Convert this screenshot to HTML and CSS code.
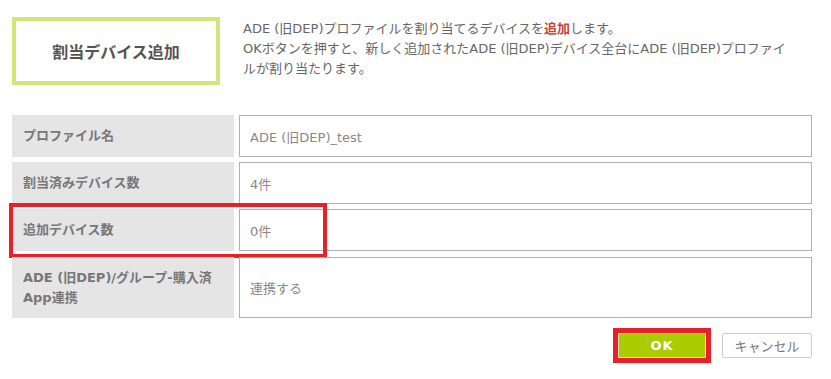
FILE: index.html
```html
<!DOCTYPE html>
<html lang="ja">
<head>
    <meta charset="UTF-8">
    <title>割当デバイス追加</title>
    <link rel="stylesheet" href="styles.css">
</head>
<body>
    <div class="page">
        <div class="header">
            <div class="title-box">割当デバイス追加</div>
            <p class="description">
                ADE (旧DEP)プロファイルを割り当てるデバイスを<span class="accent">追加</span>します。<br>
                OKボタンを押すと、新しく追加されたADE (旧DEP)デバイス全台にADE (旧DEP)プロファイルが割り当たります。
            </p>
        </div>

        <div class="form-table">
            <div class="row">
                <div class="label">プロファイル名</div>
                <div class="value">ADE (旧DEP)_test</div>
            </div>
            <div class="row">
                <div class="label">割当済みデバイス数</div>
                <div class="value">4件</div>
            </div>
            <div class="row">
                <div class="label">追加デバイス数</div>
                <div class="value">0件</div>
                <div class="highlight"></div>
            </div>
            <div class="row row-tall">
                <div class="label">ADE (旧DEP)/グループ-購入済<br>App連携</div>
                <div class="value">連携する</div>
            </div>
        </div>

        <div class="actions">
            <span class="ok-frame"><button type="button" class="btn-ok">OK</button></span>
            <button type="button" class="btn-cancel">キャンセル</button>
        </div>
    </div>
</body>
</html>
```

FILE: styles.css
```css
body {
    margin: 0;
    background-color: #fff;
    font-family: "DejaVu Sans", "Noto Sans CJK JP", sans-serif;
    color: #777;
}

.page {
    width: 800px;
    padding: 17px 0 0 12px;
}

.header {
    display: flex;
    align-items: flex-start;
}

.title-box {
    width: 208px;
    height: 68px;
    box-sizing: border-box;
    border: 4px solid #d4e37a;
    display: flex;
    align-items: center;
    justify-content: center;
    font-size: 16px;
    font-weight: bold;
    color: #555;
}

.description {
    margin: 2px 0 0 23px;
    font-size: 13px;
    line-height: 20px;
    color: #666;
    width: 550px;
}

.accent {
    color: #c8423a;
    font-weight: bold;
}

.form-table {
    margin-top: 30px;
    display: flex;
    flex-direction: column;
    gap: 5px;
}

.row {
    position: relative;
    display: flex;
    gap: 5px;
    height: 42px;
}

.row-tall {
    height: 61px;
    margin-top: 1px;
}

.label {
    width: 222px;
    box-sizing: border-box;
    padding: 0 11px;
    background-color: #e5e5e5;
    display: flex;
    align-items: center;
    font-size: 13px;
    font-weight: bold;
    line-height: 20px;
    color: #777;
}

.value {
    flex: 1;
    box-sizing: border-box;
    border: 1px solid #b0b0b0;
    padding: 0 10px;
    display: flex;
    align-items: center;
    font-size: 13px;
    color: #888;
}

.highlight {
    position: absolute;
    left: -3px;
    top: -6px;
    width: 318px;
    height: 55px;
    box-sizing: border-box;
    border: 4px solid #e8202a;
}

.actions {
    display: flex;
    justify-content: flex-end;
    align-items: center;
    gap: 11px;
    margin-top: 10px;
}

.ok-frame {
    display: inline-block;
    border: 5px solid #e8202a;
    line-height: 0;
}

.btn-ok {
    width: 88px;
    height: 25px;
    border: 1px solid #d6dcc0;
    background-color: #aacc00;
    color: #fff;
    font-family: inherit;
    font-size: 13px;
    font-weight: bold;
    letter-spacing: 1px;
    cursor: pointer;
}

.btn-cancel {
    width: 90px;
    height: 25px;
    border: 1px solid #ccc;
    border-radius: 2px;
    background-color: #fff;
    color: #777;
    font-family: inherit;
    font-size: 13px;
    cursor: pointer;
}
```
